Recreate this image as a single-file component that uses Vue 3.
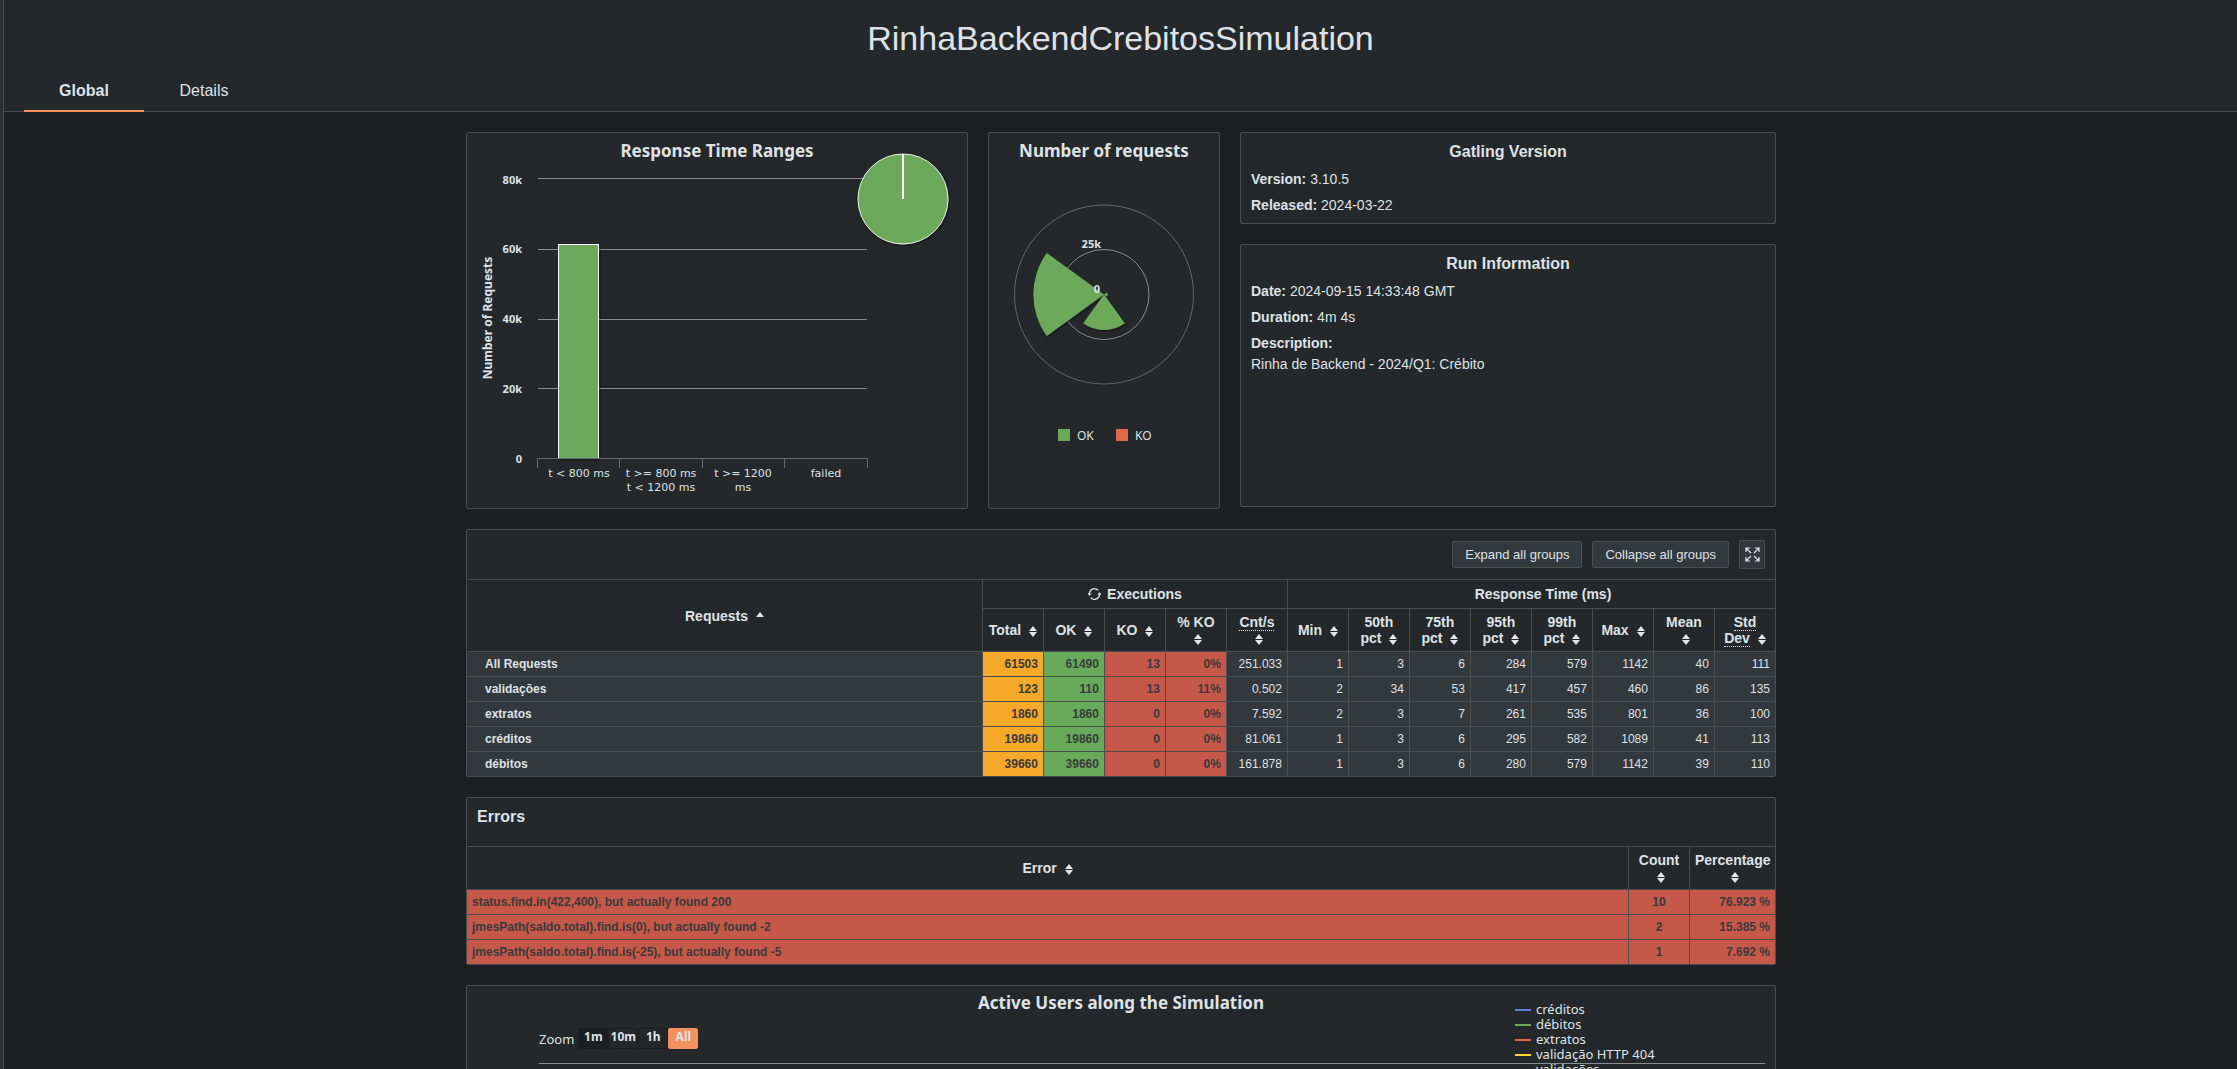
<script setup>
const columns = [
  { label: 'Total' },
  { label: 'OK' },
  { label: 'KO' },
  { label: '% KO' },
  { label: 'Cnt/s', abbr: 'Count of events per second' },
  { label: 'Min' },
  { label: '50th pct' },
  { label: '75th pct' },
  { label: '95th pct' },
  { label: '99th pct' },
  { label: 'Max' },
  { label: 'Mean' },
  { label: 'Std Dev', abbr: 'Standard Deviation' }
]
const cellClass = ['total', 'ok', 'ko', 'ko']

const requests = [
  { name: 'All Requests', values: ['61503', '61490', '13', '0%', '251.033', '1', '3', '6', '284', '579', '1142', '40', '111'] },
  { name: 'validações', values: ['123', '110', '13', '11%', '0.502', '2', '34', '53', '417', '457', '460', '86', '135'] },
  { name: 'extratos', values: ['1860', '1860', '0', '0%', '7.592', '2', '3', '7', '261', '535', '801', '36', '100'] },
  { name: 'créditos', values: ['19860', '19860', '0', '0%', '81.061', '1', '3', '6', '295', '582', '1089', '41', '113'] },
  { name: 'débitos', values: ['39660', '39660', '0', '0%', '161.878', '1', '3', '6', '280', '579', '1142', '39', '110'] }
]

const errors = [
  { message: 'status.find.in(422,400), but actually found 200', count: 10, percent: '76.923 %' },
  { message: 'jmesPath(saldo.total).find.is(0), but actually found -2', count: 2, percent: '15.385 %' },
  { message: 'jmesPath(saldo.total).find.is(-25), but actually found -5', count: 1, percent: '7.692 %' }
]

const series = [
  { name: 'créditos', color: '#5e7be2' },
  { name: 'débitos', color: '#6ca95a' },
  { name: 'extratos', color: '#e2664a' },
  { name: 'validação HTTP 404', color: '#ffdc2b' },
  { name: 'validações', color: '#24282b' }
]

const zooms = ['1m', '10m', '1h', 'All']
const gridY = [45, 116, 186, 255]
const tickX = [70, 152, 235, 317, 400]
const yLabels = [
  { text: '80k', y: 51 },
  { text: '60k', y: 120 },
  { text: '40k', y: 190 },
  { text: '20k', y: 260 },
  { text: '0', y: 330 }
]
</script>

<template>
  <div class="shell">
    <div class="page">
      <header class="top">
        <h1>RinhaBackendCrebitosSimulation</h1>
        <nav class="tabs">
          <a href="#global" class="tab active">Global</a>
          <a href="#details" class="tab">Details</a>
        </nav>
      </header>

      <main class="content">
        <div class="summary">
          <section class="card ranges">
            <svg width="500" height="375" viewBox="0 0 500 375" class="chart" role="img" aria-label="Response Time Ranges">
              <defs>
                <filter id="soft" x="-20%" y="-20%" width="140%" height="140%">
                  <feDropShadow dx="1" dy="1" stdDeviation="1" flood-color="#000" flood-opacity="0.5" />
                </filter>
              </defs>
              <text x="250" y="24" class="ctitle mid">Response Time Ranges</text>
              <g stroke="#8b8d8e" shape-rendering="crispEdges">
                <line v-for="y in gridY" :key="y" x1="71" x2="400" :y1="y + 0.5" :y2="y + 0.5" />
              </g>
              <text v-for="l in yLabels" :key="l.text" x="55" :y="l.y" class="axis end">{{ l.text }}</text>
              <text transform="translate(25 185) rotate(-90)" class="ytitle mid">Number of Requests</text>
              <rect x="91.500" y="111.500" width="40" height="214" fill="#6ca95a" stroke="#fff" filter="url(#soft)" />
              <g stroke="#66696b" shape-rendering="crispEdges">
                <line x1="70" x2="401" y1="325.5" y2="325.5" />
                <line v-for="x in tickX" :key="x" :x1="x + 0.5" :x2="x + 0.5" y1="325" y2="335" />
              </g>
              <text x="112" y="344" class="xlabel mid">t &lt; 800 ms</text>
              <text x="194" y="344" class="xlabel mid">t &gt;= 800 ms</text>
              <text x="194" y="358" class="xlabel mid">t &lt; 1200 ms</text>
              <text x="276" y="344" class="xlabel mid">t &gt;= 1200</text>
              <text x="276" y="358" class="xlabel mid">ms</text>
              <text x="359" y="344" class="xlabel mid">failed</text>
              <circle cx="436" cy="66" r="45" fill="#6ca95a" stroke="#e8f1e5" filter="url(#soft)" />
              <line x1="436" x2="436" y1="21" y2="66" stroke="#fff" stroke-width="2" />
            </svg>
          </section>

          <section class="card counts">
            <svg width="230" height="375" viewBox="0 0 230 375" class="chart" role="img" aria-label="Number of requests">
              <text x="115" y="24" class="ctitle mid">Number of requests</text>
              <circle cx="115" cy="161.500" r="89.500" fill="none" stroke="#666" />
              <circle cx="115" cy="161.500" r="45" fill="none" stroke="#8b8d8e" />
              <g fill="#6ca95a" filter="url(#soft)">
                <path d="M115 161.500L57.800 119.900A71 71 0 0 0 57.800 203.100Z" />
                <path d="M115 161.500L94.200 190.200A35.500 35.500 0 0 0 135.800 190.200Z" />
                <path d="M115 161.500L118 159.500A3.500 3.500 0 0 1 118 163.500Z" />
              </g>
              <text x="112" y="115" class="axis end">25k</text>
              <text x="111" y="160" class="axis end">0</text>
              <rect x="69" y="296" width="12" height="12" fill="#6ca95a" />
              <text x="88" y="307" class="legend">OK</text>
              <rect x="127" y="296" width="12" height="12" fill="#e2664a" />
              <text x="146" y="307" class="legend">KO</text>
            </svg>
          </section>

          <div class="infos">
            <section class="card info">
              <h2>Gatling Version</h2>
              <p><b>Version:</b> 3.10.5</p>
              <p><b>Released:</b> 2024-03-22</p>
            </section>
            <section class="card info run">
              <h2>Run Information</h2>
              <p><b>Date:</b> 2024-09-15 14:33:48 GMT</p>
              <p><b>Duration:</b> 4m 4s</p>
              <p class="desc"><b>Description:</b></p>
              <p>Rinha de Backend - 2024/Q1: Crébito</p>
            </section>
          </div>
        </div>

        <section class="card">
          <div class="toolbar">
            <button type="button" class="btn">Expand all groups</button>
            <button type="button" class="btn">Collapse all groups</button>
            <button type="button" class="btn icon" aria-label="Full screen">
              <svg width="15" height="15" viewBox="0 0 15 15" fill="none" stroke="#e3e5e7" stroke-width="1.200">
                <path d="M1 5V1H5M1 1L6 6M10 1H14V5M14 1L9 6M1 10V14H5M1 14L6 9M14 10V14H10M14 14L9 9" />
              </svg>
            </button>
          </div>
          <table class="stats">
            <colgroup>
              <col>
              <col v-for="c in columns" :key="c.label" class="num">
            </colgroup>
            <thead>
              <tr class="groups">
                <th rowspan="2" scope="col">
                  Requests <svg class="sort" width="8" height="11" viewBox="0 0 8 11"><path d="M4 0L8 5H0Z" /></svg>
                </th>
                <th colspan="5" scope="colgroup">
                  <span class="exec">
                    <svg width="13" height="14" viewBox="0 0 13 14" fill="none" stroke="#e3e5e7" stroke-width="1.300">
                      <path d="M1.500 8V6A5 5 0 0 1 10.300 3.400M11.500 6V8A5 5 0 0 1 2.700 10.600" />
                      <path d="M0 6L1.500 8.300L3.200 6.300M13 8L11.500 5.700L9.800 7.700" stroke-width="1" />
                    </svg>
                    Executions
                  </span>
                </th>
                <th colspan="8" scope="colgroup" class="rt">Response Time (ms)</th>
              </tr>
              <tr class="cols">
                <th v-for="c in columns" :key="c.label" scope="col">
                  <abbr v-if="c.abbr" :title="c.abbr">{{ c.label }}</abbr><template v-else>{{ c.label }}</template>
                  {{ ' ' }}<svg class="sort" width="8" height="11" viewBox="0 0 8 11"><path d="M4 0L8 5H0ZM4 11L8 6H0Z" /></svg>
                </th>
              </tr>
            </thead>
            <tbody>
              <tr v-for="r in requests" :key="r.name">
                <th scope="row" class="name">{{ r.name }}</th>
                <td v-for="(v, i) in r.values" :key="i" :class="cellClass[i]">{{ v }}</td>
              </tr>
            </tbody>
          </table>
        </section>

        <section class="card">
          <h2 class="errtitle">Errors</h2>
          <table class="stats errors">
            <colgroup>
              <col>
              <col class="num">
              <col class="pct">
            </colgroup>
            <thead>
              <tr class="cols">
                <th v-for="h in ['Error', 'Count', 'Percentage']" :key="h" scope="col">
                  {{ h }} <svg class="sort" width="8" height="11" viewBox="0 0 8 11"><path d="M4 0L8 5H0ZM4 11L8 6H0Z" /></svg>
                </th>
              </tr>
            </thead>
            <tbody>
              <tr v-for="e in errors" :key="e.message">
                <td class="ko msg">{{ e.message }}</td>
                <td class="ko cnt">{{ e.count }}</td>
                <td class="ko">{{ e.percent }}</td>
              </tr>
            </tbody>
          </table>
        </section>

        <section class="card users">
          <h2 class="userstitle">Active Users along the Simulation</h2>
          <div class="usersbody">
            <div class="zoom">
              <span>Zoom</span>
              <div class="zoombtns">
                <button v-for="z in zooms" :key="z" type="button" :class="['zb', { first: z === '1m', on: z === 'All' }]">{{ z }}</button>
              </div>
            </div>
            <ul class="series">
              <li v-for="s in series" :key="s.name">
                <i :style="{ background: s.color }"></i>{{ s.name }}
              </li>
            </ul>
          </div>
        </section>
      </main>
    </div>
  </div>
</template>

<style>
html, body { background: #1c1f22; }
</style>

<style scoped>
.shell {
  box-sizing: border-box;
  height: 100vh;
  overflow: hidden;
  padding-left: 3px;
  background: #2b2e31;
  color: #dee2e6;
  font-family: "Liberation Sans", Arial, sans-serif;
  font-size: 14px;
}
.page { border-left: 1px solid #4b4d4f; background: #1c1f22; min-height: 100%; }
.top {
  background: #24282b;
  border-bottom: 1px solid #4b4d4f;
  height: 111px;
  display: flex;
  flex-direction: column;
  justify-content: space-between;
}
h1 { margin: 0; padding-top: 17px; text-align: center; font-size: 34px; line-height: 42px; font-weight: 400; }
.tabs { display: flex; padding-left: 20px; margin-bottom: -1px; }
.tab {
  width: 120px;
  height: 40px;
  line-height: 42px;
  text-align: center;
  font-size: 16px;
  color: inherit;
  text-decoration: none;
  border-bottom: 2px solid transparent;
}
.tab.active { font-weight: 700; border-bottom-color: #f5915e; }

.content {
  max-width: 1310px;
  margin: 0 auto;
  padding: 20px 0 0 1px;
  display: flex;
  flex-direction: column;
  gap: 20px;
}
.card { background: #24282b; border: 1px solid #4b4d4f; border-radius: 2px; }
.summary { display: flex; gap: 20px; align-items: flex-start; }
.infos { flex: 1; display: flex; flex-direction: column; gap: 20px; }
.chart { display: block; font-family: "Noto Sans", sans-serif; fill: #dee2e6; overflow: visible; }
.mid { text-anchor: middle; }
.end { text-anchor: end; }
.ctitle { font-size: 17px; font-weight: 700; }
.axis { font-size: 11px; font-weight: 700; }
.ytitle { font-size: 12px; font-weight: 700; }
.xlabel { font-size: 11px; font-family: "DejaVu Sans", sans-serif; }
.legend { font-size: 12px; }

h2 { margin: 0; font-size: 16px; line-height: 18px; font-weight: 700; }
.info { padding: 10px 10px 6px; min-height: 74px; }
.info h2 { text-align: center; margin-bottom: 10px; }
.info p { margin: 0 0 10px; line-height: 16px; }
.info p:last-child { margin-bottom: 0; }
.info .desc { margin-bottom: 5px; }
.run { min-height: 245px; }

.toolbar { height: 49px; display: flex; justify-content: flex-end; align-items: center; gap: 10px; padding-right: 10px; }
.btn {
  height: 27px;
  padding: 0 12px;
  background: #33383c;
  border: 1px solid #4b4d4f;
  border-radius: 2px;
  color: inherit;
  font: 13px/16px "Liberation Sans", Arial, sans-serif;
}
.btn.icon { width: 26px; height: 29px; padding: 0; display: flex; align-items: center; justify-content: center; }

.stats { width: 100%; table-layout: fixed; border-collapse: separate; border-spacing: 0; }
.num { width: 61px; }
.pct { width: 86px; }
.stats th, .stats td {
  box-sizing: border-box;
  border-top: 1px solid #4b4d4f;
  border-left: 1px solid #4b4d4f;
  padding: 0 5px;
}
.stats tr > :first-child { border-left: 0; }
.stats .cols > th:first-child { border-left: 1px solid #4b4d4f; }
.stats.errors .cols > th:first-child { border-left: 0; }
.groups { height: 29px; }
.cols { height: 43px; }
.stats thead th { font-size: 14px; line-height: 16px; }
.stats .rt { padding-left: 28px; }
.stats tbody tr { height: 25px; }
.stats tbody th, .stats tbody td { font-size: 12px; line-height: 14px; background: #33383c; }
.stats tbody .name { text-align: left; padding-left: 18px; }
.stats td { text-align: right; }
.stats tbody .total { background: #f6a828; }
.stats tbody .ok { background: #66aa5a; }
.stats tbody .ko { background: #c65849; }
.stats tbody .total, .stats tbody .ok, .stats tbody .ko { color: #3a3a3a; font-weight: 700; }
.stats tbody .msg { text-align: left; }
.stats tbody .cnt { text-align: center; }
.sort { margin-left: 4px; vertical-align: -2px; fill: #e3e5e7; }
abbr { text-decoration: none; border-bottom: 1px dotted #dee2e6; }
.exec { display: flex; align-items: center; justify-content: center; gap: 6px; }

.errtitle { height: 48px; padding-left: 10px; box-sizing: border-box; padding-top: 10px; }

.users { font-family: "Noto Sans", sans-serif; font-size: 13px; height: 400px; }
.userstitle { text-align: center; font-size: 17px; line-height: 24px; padding-top: 5px; height: 11px; }
.usersbody { margin: 0 10px 0 72px; height: 61px; border-bottom: 1px solid #8b8d8e; display: flex; justify-content: space-between; }
.zoom { display: flex; align-items: flex-start; padding-top: 26px; gap: 4px; line-height: 22px; }
.zoombtns { display: flex; }
.zb {
  width: 30px;
  height: 21px;
  padding: 0 0 4px;
  border: 1px solid #1c1f22;
  border-radius: 2px;
  background: #24282b;
  color: inherit;
  font: 700 12px/14px "Noto Sans", sans-serif;
  white-space: nowrap;
  display: flex;
  align-items: center;
  justify-content: center;
}
.zb.first { background: #1c1f22; }
.zb.on { background: #f5915e; border-color: #f5915e; }
.series { list-style: none; margin: 0; padding: 0; width: 250px; line-height: 15px; }
.series li { display: flex; align-items: center; gap: 5px; }
.series i { width: 16px; height: 2px; }
</style>
